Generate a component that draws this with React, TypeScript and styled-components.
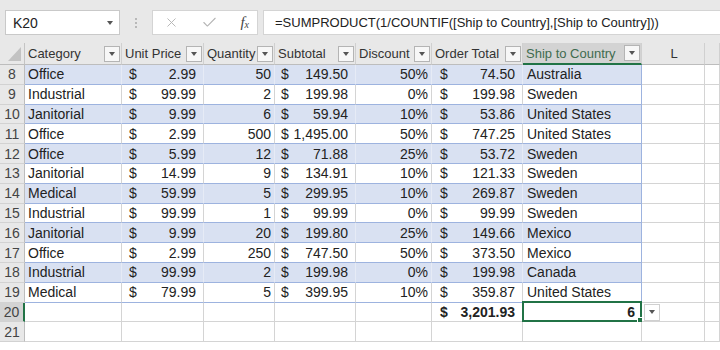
import React from 'react';
import styled, { createGlobalStyle } from 'styled-components';
import { X, Check } from 'lucide-react';

const GlobalStyle = createGlobalStyle`
  body {
    margin: 0;
    background: #ffffff;
    font-family: "Liberation Sans", Arial, sans-serif;
  }
`;

type Kind = 'text' | 'num' | 'money';

const columns: { title: string; kind: Kind; padL: number; padR: number }[] = [
  { title: 'Category', kind: 'text', padL: 3, padR: 3 },
  { title: 'Unit Price', kind: 'money', padL: 7, padR: 7 },
  { title: 'Quantity', kind: 'num', padL: 3, padR: 3 },
  { title: 'Subtotal', kind: 'money', padL: 6, padR: 7 },
  { title: 'Discount', kind: 'num', padL: 3, padR: 3 },
  { title: 'Order Total', kind: 'money', padL: 8, padR: 7 },
  { title: 'Ship to Country', kind: 'text', padL: 4, padR: 3 },
];

const rows: string[][] = [
  ['Office', '2.99', '50', '149.50', '50%', '74.50', 'Australia'],
  ['Industrial', '99.99', '2', '199.98', '0%', '199.98', 'Sweden'],
  ['Janitorial', '9.99', '6', '59.94', '10%', '53.86', 'United States'],
  ['Office', '2.99', '500', '1,495.00', '50%', '747.25', 'United States'],
  ['Office', '5.99', '12', '71.88', '25%', '53.72', 'Sweden'],
  ['Janitorial', '14.99', '9', '134.91', '10%', '121.33', 'Sweden'],
  ['Medical', '59.99', '5', '299.95', '10%', '269.87', 'Sweden'],
  ['Industrial', '99.99', '1', '99.99', '0%', '99.99', 'Sweden'],
  ['Janitorial', '9.99', '20', '199.80', '25%', '149.66', 'Mexico'],
  ['Office', '2.99', '250', '747.50', '50%', '373.50', 'Mexico'],
  ['Industrial', '99.99', '2', '199.98', '0%', '199.98', 'Canada'],
  ['Medical', '79.99', '5', '399.95', '10%', '359.87', 'United States'],
];

const App = () => {
  return (
    <Window>
      <GlobalStyle />
      <FormulaBar>
        <NameBox>
          <span>K20</span>
          <SmallArrow />
        </NameBox>
        <Dots>
          <i />
          <i />
          <i />
        </Dots>
        <ButtonGroup>
          <X size={15} strokeWidth={1.5} color="#b4b4b4" />
          <Check size={17} strokeWidth={1.5} color="#b4b4b4" />
          <Fx>
            f<sub>x</sub>
          </Fx>
        </ButtonGroup>
        <FormulaInput>=SUMPRODUCT(1/COUNTIF([Ship to Country],[Ship to Country]))</FormulaInput>
      </FormulaBar>

      <Sheet>
        <Corner>
          <Triangle />
        </Corner>
        {columns.map((c) => (
          <ColHeader key={c.title} $active={c.title === 'Ship to Country'}>
            <span>{c.title}</span>
            <FilterButton>
              <SmallArrow />
            </FilterButton>
          </ColHeader>
        ))}
        <ColHeader $center>L</ColHeader>
        <ColHeader />

        {rows.map((r, i) => {
          const band = i % 2 === 0;
          return (
            <React.Fragment key={i}>
              <RowHeader>{i + 8}</RowHeader>
              {r.map((v, j) => {
                const col = columns[j];
                return (
                  <Cell
                    key={j}
                    $band={band}
                    $table
                    $edge={j === columns.length - 1}
                    $kind={col.kind}
                    $padL={col.padL}
                    $padR={col.padR}
                  >
                    {col.kind === 'money' && <span>$</span>}
                    <span>{v}</span>
                  </Cell>
                );
              })}
              <Cell $kind="text" $padL={3} $padR={3} />
              <Cell $kind="text" $padL={3} $padR={3} />
            </React.Fragment>
          );
        })}

        <RowHeader $active>20</RowHeader>
        {columns.map((col, j) => {
          if (j === 5) {
            return (
              <Cell key={j} $kind="money" $padL={col.padL} $padR={col.padR} $bold>
                <span>$</span>
                <span>3,201.93</span>
              </Cell>
            );
          }
          if (j === 6) {
            return (
              <Cell key={j} $kind="num" $padL={3} $padR={6} $bold>
                <span>6</span>
                <Selection>
                  <Handle />
                </Selection>
                <CellDrop>
                  <SmallArrow />
                </CellDrop>
              </Cell>
            );
          }
          return <Cell key={j} $kind="text" $padL={3} $padR={3} />;
        })}
        <Cell $kind="text" $padL={3} $padR={3} />
        <Cell $kind="text" $padL={3} $padR={3} />

        <RowHeader>21</RowHeader>
        {columns.map((c) => (
          <Cell key={c.title} $kind="text" $padL={3} $padR={3} />
        ))}
        <Cell $kind="text" $padL={3} $padR={3} />
        <Cell $kind="text" $padL={3} $padR={3} />
      </Sheet>
    </Window>
  );
};

const Window = styled.div`
  width: 720px;
  height: 350px;
  overflow: hidden;
  background: #ffffff;
`;

const FormulaBar = styled.div`
  height: 43px;
  background: #e8e8e8;
  display: flex;
  align-items: flex-start;
  padding: 10px 0 0 5px;
  box-sizing: border-box;
`;

const NameBox = styled.div`
  width: 115px;
  height: 25px;
  box-sizing: border-box;
  background: #ffffff;
  border: 1px solid #c9c9c9;
  display: flex;
  align-items: center;
  justify-content: space-between;
  padding: 0 6px 0 7px;
  font-size: 14px;
  color: #222222;
`;

const SmallArrow = styled.i`
  width: 0;
  height: 0;
  border-left: 3.5px solid transparent;
  border-right: 3.5px solid transparent;
  border-top: 4px solid #555555;
`;

const Dots = styled.div`
  width: 32px;
  height: 25px;
  display: flex;
  flex-direction: column;
  align-items: center;
  justify-content: center;
  gap: 2px;

  i {
    width: 2px;
    height: 2px;
    background: #a8a8a8;
    border-radius: 50%;
  }
`;

const ButtonGroup = styled.div`
  width: 106px;
  height: 25px;
  box-sizing: border-box;
  background: #ffffff;
  border: 1px solid #d4d4d4;
  display: flex;
  align-items: center;
  justify-content: space-between;
  padding: 0 8px 0 11px;
`;

const Fx = styled.span`
  font-family: "Liberation Serif", "Times New Roman", serif;
  font-style: italic;
  font-size: 15px;
  color: #444444;

  sub {
    font-size: 10px;
    vertical-align: -1px;
  }
`;

const FormulaInput = styled.div`
  flex: 1;
  margin-left: 5px;
  height: 25px;
  box-sizing: border-box;
  background: #ffffff;
  border: 1px solid #d4d4d4;
  border-right: none;
  padding-left: 11px;
  display: flex;
  align-items: center;
  font-size: 13px;
  color: #222222;
  white-space: nowrap;
  overflow: hidden;
`;

const Sheet = styled.div`
  display: grid;
  grid-template-columns: 25px 97px 82px 71px 81px 76px 91px 119px 63px 1fr;
  grid-template-rows: 22px;
  grid-auto-rows: 19.8px;
  font-size: 14px;
  color: #222222;
`;

const Corner = styled.div`
  background: #e8e8e8;
  border-right: 1px solid #c4c4c4;
  border-bottom: 1px solid #bdbdbd;
  position: relative;
`;

const Triangle = styled.i`
  position: absolute;
  right: 3px;
  bottom: 3px;
  width: 0;
  height: 0;
  border-left: 13px solid transparent;
  border-bottom: 14px solid #c2c2c2;
`;

const ColHeader = styled.div<{ $active?: boolean; $center?: boolean }>`
  box-sizing: border-box;
  background: ${(p) => (p.$active ? '#d3d3d3' : '#e8e8e8')};
  border-right: 1px solid #d0d0d0;
  border-bottom: ${(p) => (p.$active ? '2px solid #217346' : '1px solid #bdbdbd')};
  color: ${(p) => (p.$active ? '#3f6b4f' : '#333333')};
  font-size: 13px;
  display: flex;
  align-items: center;
  justify-content: ${(p) => (p.$center ? 'center' : 'space-between')};
  padding: 0 1px 0 3px;
  white-space: nowrap;
  overflow: hidden;
`;

const FilterButton = styled.div`
  width: 16px;
  height: 16px;
  flex: none;
  box-sizing: border-box;
  background: #f7f7f7;
  border: 1px solid #b4b4b4;
  display: flex;
  align-items: center;
  justify-content: center;
`;

const RowHeader = styled.div<{ $active?: boolean }>`
  box-sizing: border-box;
  background: ${(p) => (p.$active ? '#d3d3d3' : '#e8e8e8')};
  border-right: ${(p) => (p.$active ? '2px solid #217346' : '1px solid #bdbdbd')};
  border-bottom: 1px solid #d2d2d2;
  color: #444444;
  display: flex;
  align-items: center;
  justify-content: center;
`;

const Cell = styled.div<{
  $band?: boolean;
  $table?: boolean;
  $edge?: boolean;
  $kind: Kind;
  $padL: number;
  $padR: number;
  $bold?: boolean;
}>`
  position: relative;
  box-sizing: border-box;
  background: ${(p) => (p.$band ? '#d9e1f2' : '#ffffff')};
  border-right: 1px solid
    ${(p) => (p.$edge ? '#9db3df' : p.$band ? '#e6ebf6' : '#d4d4d4')};
  border-bottom: 1px solid ${(p) => (p.$table ? '#9db3df' : '#d4d4d4')};
  padding: 0 ${(p) => p.$padR}px 0 ${(p) => p.$padL}px;
  display: flex;
  align-items: center;
  justify-content: ${(p) =>
    p.$kind === 'money' ? 'space-between' : p.$kind === 'num' ? 'flex-end' : 'flex-start'};
  font-weight: ${(p) => (p.$bold ? 700 : 400)};
  white-space: nowrap;
`;

const Selection = styled.div`
  position: absolute;
  left: -1px;
  top: -2px;
  right: -1px;
  bottom: -1px;
  border: 2px solid #217346;
`;

const Handle = styled.i`
  position: absolute;
  right: -4px;
  bottom: -4px;
  width: 5px;
  height: 5px;
  background: #217346;
  border: 1px solid #ffffff;
`;

const CellDrop = styled.div`
  position: absolute;
  left: calc(100% + 3px);
  top: 1px;
  width: 16px;
  height: 17px;
  box-sizing: border-box;
  background: #ffffff;
  border: 1px solid #d0d0d0;
  display: flex;
  align-items: center;
  justify-content: center;
  z-index: 2;
`;

export default App;
